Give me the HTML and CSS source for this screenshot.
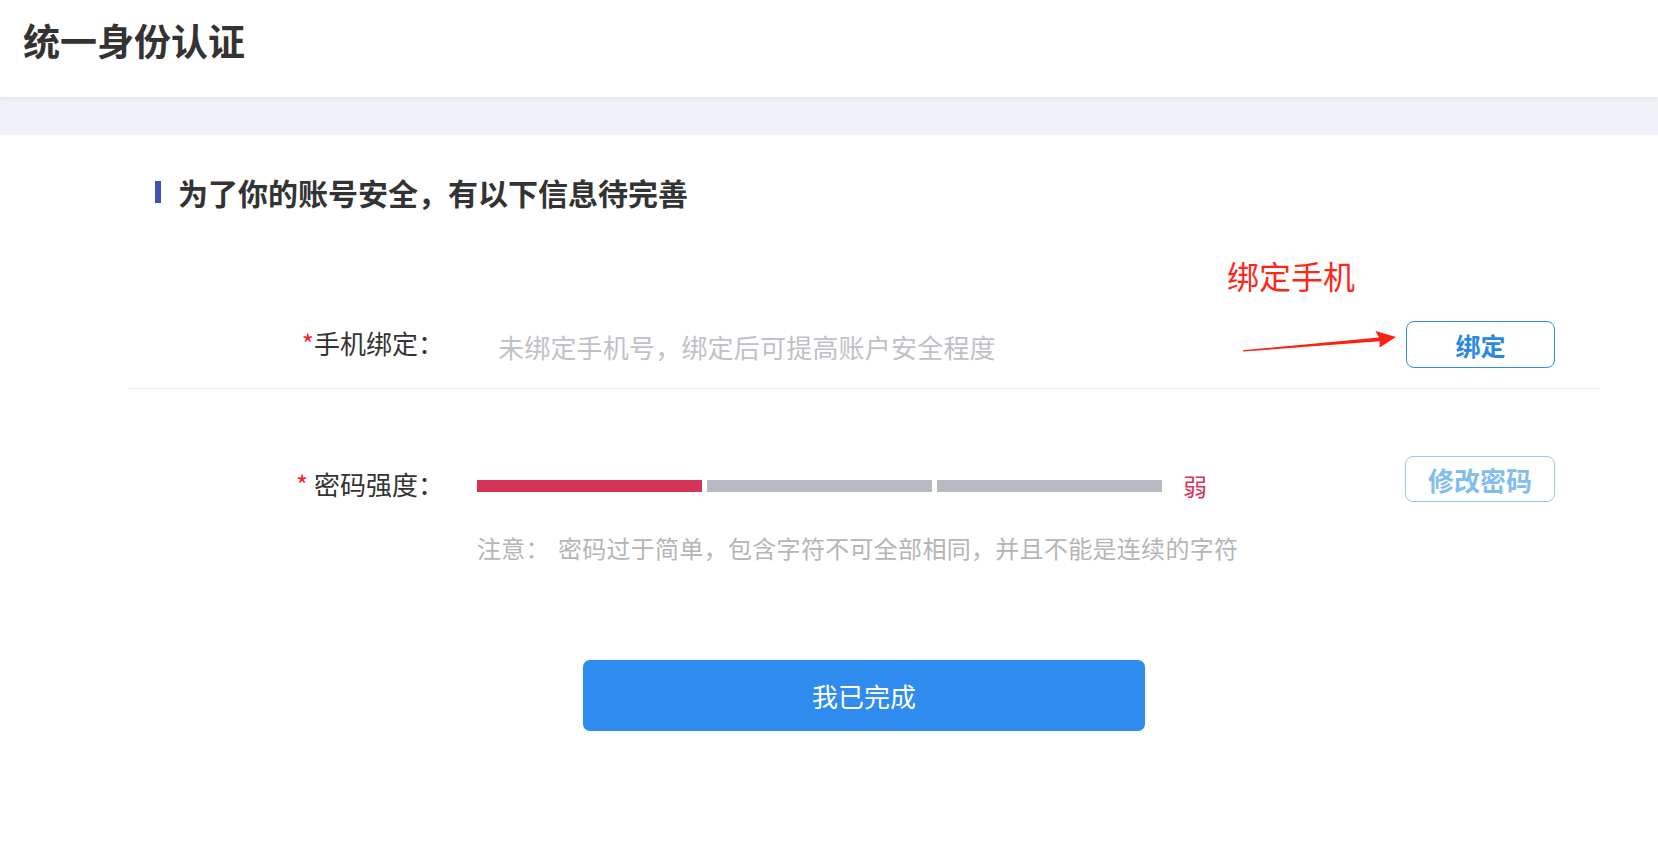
FILE: index.html
```html
<!DOCTYPE html>
<html lang="zh-CN">
<head>
<meta charset="utf-8">
<title>统一身份认证</title>
<link rel="stylesheet" href="styles.css">
</head>
<body>
<header class="topbar">
  <h1 class="brand">统一身份认证</h1>
</header>
<div class="band"></div>
<main class="card">
  <div class="container">
    <h2 class="section-title">为了你的账号安全，有以下信息待完善</h2>

    <div class="row row-phone">
      <div class="label"><span class="req">*</span>手机绑定：</div>
      <div class="field"><span class="placeholder">未绑定手机号，绑定后可提高账户安全程度</span></div>
      <button class="btn-outline">绑定</button>
      <div class="annotation">绑定手机</div>
      <svg class="arrow" width="160" height="28" viewBox="0 0 160 28" aria-hidden="true">
        <polygon points="3,22.3 139,9.4 135.5,3 156,9 139.5,19.5 139.6,13.2 3,23.6" fill="#ff1f10"/>
      </svg>
    </div>

    <div class="row row-pwd">
      <div class="label label-pwd"><span class="req">*</span> 密码强度：</div>
      <div class="field">
        <div class="strength">
          <span class="bar bar-on"></span>
          <span class="bar"></span>
          <span class="bar"></span>
          <span class="level">弱</span>
        </div>
        <p class="note"><span class="note-head">注意：</span>密码过于简单，包含字符不可全部相同，并且不能是连续的字符</p>
      </div>
      <button class="btn-outline btn-light">修改密码</button>
    </div>

    <div class="actions">
      <button class="btn-primary">我已完成</button>
    </div>
  </div>
</main>
</body>
</html>
```

FILE: styles.css
```css
* {
  box-sizing: border-box;
}

html, body {
  margin: 0;
  padding: 0;
  background: #ffffff;
  font-family: "Noto Sans CJK SC", "Noto Sans", sans-serif;
  color: #333333;
}

.topbar {
  height: 97px;
  padding: 21px 0 0 23px;
  background: #ffffff;
  box-shadow: 0 2px 5px rgba(0, 0, 0, 0.06);
  position: relative;
  z-index: 1;
}

.brand {
  margin: 0;
  font-size: 37px;
  line-height: 38px;
  font-weight: 700;
  color: #333333;
}

.band {
  height: 38px;
  background: #eff2f7;
}

.card {
  background: #ffffff;
}

.container {
  width: 1472px;
  margin-left: 128px;
}

.section-title {
  margin: 42px 0 0 27px;
  display: flex;
  align-items: center;
  font-size: 30px;
  line-height: 30px;
  font-weight: 700;
  color: #333333;
}

.section-title::before {
  content: "";
  width: 6px;
  height: 22px;
  background: #3f51b5;
  margin-right: 17px;
}

.row {
  display: grid;
  grid-template-columns: 316px 1fr auto;
  column-gap: 33px;
  padding-right: 45px;
}

.row-phone {
  position: relative;
  margin-top: 114px;
  padding-bottom: 20px;
  border-bottom: 1px solid #ececec;
  align-items: center;
}

.label {
  text-align: right;
  font-size: 26px;
  line-height: 30px;
  color: #333333;
  margin-top: -4px;
}

.req {
  color: #f5222d;
}

.field {
  min-width: 0;
}

.placeholder {
  display: block;
  padding: 5px 0 0 21px;
  font-size: 26px;
  line-height: 30px;
  color: #bfc1c7;
  letter-spacing: 0.2px;
}

.btn-outline {
  width: 149px;
  height: 47px;
  border: 1px solid #2f8fe8;
  border-radius: 8px;
  background: #ffffff;
  color: #2a88e2;
  font-family: inherit;
  font-size: 25px;
  font-weight: 700;
  padding: 0;
}

.btn-light {
  width: 150px;
  height: 46px;
  border-color: #93c8f3;
  color: #82bdf0;
  font-size: 26px;
}

.annotation {
  position: absolute;
  left: 1099px;
  top: -62px;
  font-size: 32px;
  line-height: 32px;
  color: #ff2617;
}

.arrow {
  position: absolute;
  left: 1112px;
  top: 7px;
}

.row-pwd {
  margin-top: 67px;
  align-items: start;
}

.label-pwd {
  margin-top: 13px;
}

.strength {
  display: flex;
  align-items: center;
  height: 30px;
  margin-top: 15px;
}

.bar {
  width: 225px;
  height: 12px;
  background: #b6b8c2;
  margin-right: 5px;
}

.bar-on {
  background: #d63358;
}

.bar:nth-child(3) {
  margin-right: 21px;
}

.level {
  font-size: 24px;
  line-height: 30px;
  color: #d63358;
}

.note {
  margin: 32px 0 0;
  font-size: 24px;
  line-height: 30px;
  color: #b5b5b5;
  white-space: nowrap;
  letter-spacing: 0.3px;
}

.note-head {
  margin-right: 8px;
}

.actions {
  display: flex;
  justify-content: center;
  margin-top: 97px;
}

.btn-primary {
  width: 562px;
  height: 71px;
  border: none;
  border-radius: 7px;
  background: #2f8bee;
  color: #ffffff;
  font-family: inherit;
  font-size: 26px;
  padding: 0;
}
```
